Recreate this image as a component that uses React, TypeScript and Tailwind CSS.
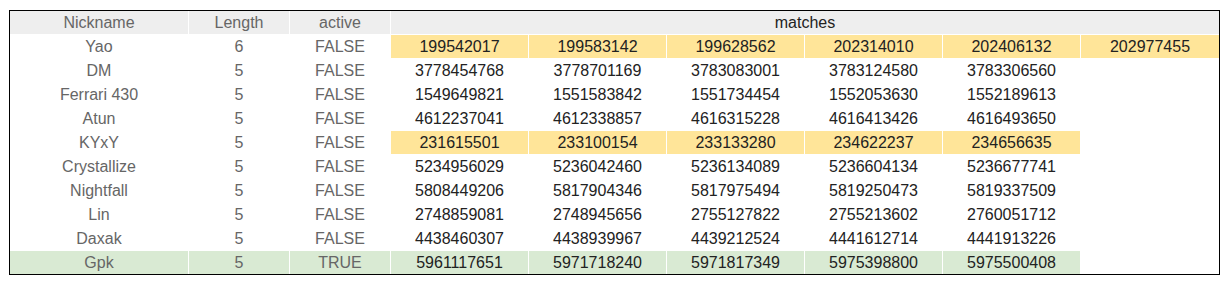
const rows: { name: string; len: number; active: boolean; matches: string[]; tone?: "yellow" | "green" }[] = [
  { name: "Yao", len: 6, active: false, tone: "yellow", matches: ["199542017", "199583142", "199628562", "202314010", "202406132", "202977455"] },
  { name: "DM", len: 5, active: false, matches: ["3778454768", "3778701169", "3783083001", "3783124580", "3783306560"] },
  { name: "Ferrari 430", len: 5, active: false, matches: ["1549649821", "1551583842", "1551734454", "1552053630", "1552189613"] },
  { name: "Atun", len: 5, active: false, matches: ["4612237041", "4612338857", "4616315228", "4616413426", "4616493650"] },
  { name: "KYxY", len: 5, active: false, tone: "yellow", matches: ["231615501", "233100154", "233133280", "234622237", "234656635"] },
  { name: "Crystallize", len: 5, active: false, matches: ["5234956029", "5236042460", "5236134089", "5236604134", "5236677741"] },
  { name: "Nightfall", len: 5, active: false, matches: ["5808449206", "5817904346", "5817975494", "5819250473", "5819337509"] },
  { name: "Lin", len: 5, active: false, matches: ["2748859081", "2748945656", "2755127822", "2755213602", "2760051712"] },
  { name: "Daxak", len: 5, active: false, matches: ["4438460307", "4438939967", "4439212524", "4441612714", "4441913226"] },
  { name: "Gpk", len: 5, active: true, tone: "green", matches: ["5961117651", "5971718240", "5971817349", "5975398800", "5975500408"] },
];

function toneClass(tone?: "yellow" | "green") {
  if (tone === "yellow") return "bg-[#ffe599]";
  if (tone === "green") return "bg-[#d9ead3]";
  return "bg-white";
}

export default function App() {
  return (
    <div className="pt-[10px] pl-[9px] font-['Liberation_Sans',Arial,sans-serif] text-[16px] leading-none">
      <div className="w-[1211px] border border-black bg-white">
        <div className="grid grid-cols-[178px_100px_100px_137px_137px_137px_137px_137px_138px] auto-rows-[23px] gap-px bg-white">
          {/* header */}
          <div className="flex items-center justify-center bg-[#eeeeee] text-[#666666]">Nickname</div>
          <div className="flex items-center justify-center bg-[#eeeeee] text-[#666666]">Length</div>
          <div className="flex items-center justify-center bg-[#eeeeee] text-[#666666]">active</div>
          <div className="col-span-6 flex items-center justify-center bg-[#eeeeee] text-[#222222]">matches</div>

          {rows.map((r) => {
            // only the green row colours the info columns too
            const info = r.tone === "green" ? toneClass(r.tone) : "bg-white";
            const tone = toneClass(r.tone);
            const cells = [...r.matches];
            while (cells.length < 6) cells.push("");
            return [
              <div key={r.name + "-n"} className={`flex items-center justify-center text-[#666666] ${info}`}>{r.name}</div>,
              <div key={r.name + "-l"} className={`flex items-center justify-center text-[#666666] ${info}`}>{r.len}</div>,
              <div key={r.name + "-a"} className={`flex items-center justify-center text-[#666666] ${info}`}>{r.active ? "TRUE" : "FALSE"}</div>,
              ...cells.map((m, i) => (
                <div
                  key={r.name + "-m" + i}
                  className={`flex items-center justify-center text-[#222222] ${m ? tone : "bg-white"}`}
                >
                  {m}
                </div>
              )),
            ];
          })}
        </div>
      </div>
    </div>
  );
}
